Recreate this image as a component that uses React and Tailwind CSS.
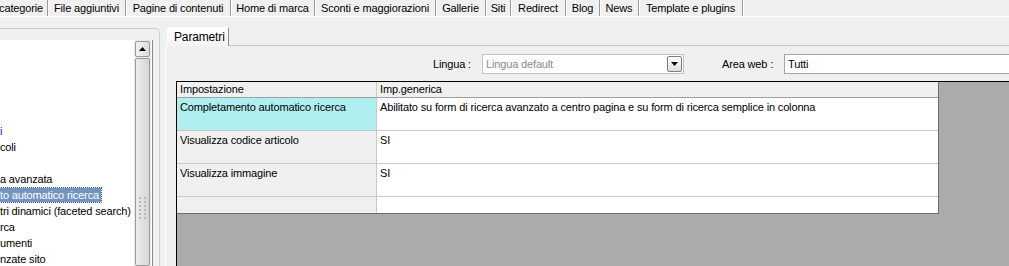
import React from "react";

const tabs = [
  { label: "categorie", w: "w-[48px]", align: "justify-end pr-[4px]" },
  { label: "File aggiuntivi", w: "w-[78px]" },
  { label: "Pagine di contenuti", w: "w-[105px]" },
  { label: "Home di marca", w: "w-[84px]" },
  { label: "Sconti e maggiorazioni", w: "w-[121px]" },
  { label: "Gallerie", w: "w-[50px]" },
  { label: "Siti", w: "w-[25px]" },
  { label: "Redirect", w: "w-[55px]" },
  { label: "Blog", w: "w-[34px]" },
  { label: "News", w: "w-[39px]" },
  { label: "Template e plugins", w: "w-[104px]" },
];

const treeItems = [
  { text: "" },
  { text: "" },
  { text: "" },
  { text: "" },
  { text: "" },
  { text: "i", blue: true },
  { text: "coli" },
  { text: "" },
  { text: "a avanzata" },
  { text: "to automatico ricerca", selected: true },
  { text: "tri dinamici (faceted search)" },
  { text: "rca" },
  { text: "umenti" },
  { text: "nzate sito" },
];

const rows = [
  { name: "Completamento automatico ricerca", value: "Abilitato su form di ricerca avanzato a centro pagina e su form di ricerca semplice in colonna", active: true },
  { name: "Visualizza codice articolo", value: "SI" },
  { name: "Visualizza immagine", value: "SI" },
];

export default function App() {
  return (
    <div
      className="w-[1009px] h-[266px] overflow-hidden bg-[#f0f0f0] text-[11px] leading-[13px] tracking-[-0.15px] text-black flex flex-col"
      style={{ fontFamily: '"Liberation Sans", Arial, sans-serif' }}
    >
      {/* barra schede in alto */}
      <div className="h-[17px] flex border-b border-white shrink-0">
        {tabs.map((t, i) => (
          <div
            key={i}
            className={`${t.w} h-[16px] flex items-center ${t.align || "justify-center"} border-r border-[#9a9a9a] shadow-[1px_0_0_#ffffff] whitespace-nowrap`}
          >
            {t.label}
          </div>
        ))}
      </div>

      <div className="flex flex-1 min-h-0">
        {/* pannello albero a sinistra */}
        <div className="w-[160px] shrink-0 pt-[11px]">
          <div className="h-full border-t border-r border-[#c9d0d6] rounded-tr-[5px] pr-[6px] pt-[11px]">
            <div className="h-full flex border-r border-[#8a8a8a] bg-white">
              <div className="w-[134px] overflow-hidden pt-[3px]">
                {treeItems.map((it, i) => (
                  <div key={i} className="h-[16px] flex items-center">
                    {it.text && (
                      <span
                        className={`h-[14px] pr-[2px] whitespace-nowrap flex items-center ${
                          it.selected
                            ? "bg-[#7393c2] text-white outline outline-1 outline-dotted outline-[#3d4f70]"
                            : it.blue
                            ? "text-[#2424a8]"
                            : "bg-white"
                        }`}
                      >
                        {it.text}
                      </span>
                    )}
                  </div>
                ))}
              </div>
              {/* scrollbar */}
              <div className="w-[17px] flex flex-col bg-[#eaeaea] pt-[1px]">
                <div className="h-[16px] mx-[1px] border border-[#9b9b9b] rounded-[2px] bg-gradient-to-r from-[#f4f4f4] to-[#dcdcdc] flex items-center justify-center">
                  <svg width="7" height="4" viewBox="0 0 7 4">
                    <path d="M3.5 0 L7 4 L0 4 Z" fill="#000" />
                  </svg>
                </div>
                <div className="flex-1 mx-[1px] mt-[1px] border border-[#9b9b9b] rounded-[2px] bg-gradient-to-r from-[#ededed] to-[#d6d6d6] flex items-end justify-center pb-[46px]">
                  <div className="grid grid-cols-2 gap-x-[3px] gap-y-[2px]">
                    {Array.from({ length: 12 }).map((_, k) => (
                      <div key={k} className="w-[2px] h-[2px] bg-[#b8b8b8]" />
                    ))}
                  </div>
                </div>
              </div>
            </div>
          </div>
        </div>

        {/* area schede destra */}
        <div className="flex-1 flex flex-col pl-[5px] pt-[10px] min-w-0">
          <div className="flex h-[19px] shrink-0">
            <div className="ml-[2px] w-[62px] h-[19px] bg-gradient-to-b from-white to-[#f4f4f4] border-t border-l border-white border-r border-r-[#8c8c8c] flex items-center pl-[6px] text-[12px]">
              Parametri
            </div>
            <div className="flex-1 border-b border-[#c5c5c5]" />
          </div>
          <div className="flex-1 flex flex-col border-l border-white pl-[10px] min-h-0">
            {/* filtri */}
            <div className="h-[35px] flex items-center pt-[1px] shrink-0">
              <span className="ml-[257px] w-[40px]">Lingua :</span>
              <div className="ml-[9px] w-[202px] h-[20px] border border-[#c4c4b4] bg-white flex items-center pl-[3px] pr-[1px] text-[#8a8a8a]">
                <span className="flex-1">Lingua default</span>
                <div className="w-[15px] h-[16px] border border-[#7f7f7f] rounded-[2px] bg-gradient-to-b from-white to-[#dedede] flex items-center justify-center">
                  <svg width="7" height="4" viewBox="0 0 7 4">
                    <path d="M0 0 L7 0 L3.5 4 Z" fill="#000" />
                  </svg>
                </div>
              </div>
              <span className="ml-[38px] w-[54px]">Area web :</span>
              <div className="ml-[8px] flex-1 h-[20px] border border-[#a5a5a5] border-r-0 bg-white flex items-center pl-[3px]">
                Tutti
              </div>
            </div>

            {/* griglia */}
            <div className="flex-1 bg-[#ababab] border-t border-l border-black min-h-0">
              <div className="w-[762px] border-r border-b border-[#6e6e6e]">
                <div className="flex h-[16px] bg-[#f0f0f0] border-b border-[#a0a0a0]">
                  <div className="w-[200px] border-r border-[#c8c8c8] pl-[3px] flex items-center">Impostazione</div>
                  <div className="flex-1 pl-[3px] flex items-center">Imp.generica</div>
                </div>
                {rows.map((r, i) => (
                  <div key={i} className="flex h-[33px] border-b border-[#c8c8c8]">
                    <div
                      className={`w-[200px] border-r border-[#c8c8c8] pl-[3px] pt-[3px] ${
                        r.active ? "bg-[#b0efef]" : "bg-[#f0f0f0]"
                      }`}
                    >
                      {r.name}
                    </div>
                    <div className="flex-1 bg-white pl-[3px] pt-[3px]">{r.value}</div>
                  </div>
                ))}
                <div className="flex h-[16px]">
                  <div className="w-[200px] border-r border-[#c8c8c8] bg-[#f0f0f0]" />
                  <div className="flex-1 bg-white" />
                </div>
              </div>
            </div>
          </div>
        </div>
      </div>
    </div>
  );
}
